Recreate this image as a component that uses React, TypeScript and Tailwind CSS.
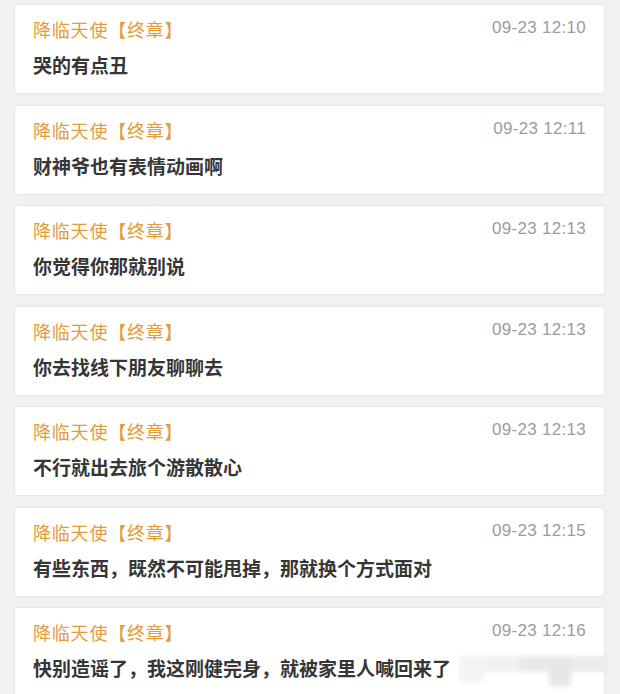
import React from "react";

interface Message {
  time: string;
  text: string;
}

const messages: Message[] = [
  { time: "09-23 12:10", text: "哭的有点丑" },
  { time: "09-23 12:11", text: "财神爷也有表情动画啊" },
  { time: "09-23 12:13", text: "你觉得你那就别说" },
  { time: "09-23 12:13", text: "你去找线下朋友聊聊去" },
  { time: "09-23 12:13", text: "不行就出去旅个游散散心" },
  { time: "09-23 12:15", text: "有些东西，既然不可能甩掉，那就换个方式面对" },
  { time: "09-23 12:16", text: "快别造谣了，我这刚健完身，就被家里人喊回来了" },
];

const cjk = { fontFamily: '"Microsoft YaHei", "Noto Sans CJK SC", "Noto Sans", sans-serif' };

const MessageCard: React.FC<{ msg: Message; last?: boolean }> = ({ msg, last }) => {
  return (
    <div className="relative h-[90px] shrink-0 rounded-[3px] border border-[#e6e6e6] bg-white px-[18px] pt-[12px]">
      <div className="flex h-[24px] items-center justify-between">
        <span className="text-[18px] leading-[24px] tracking-[0.8px] text-[#e49b3a]" style={cjk}>
          降临天使【终章】
        </span>
        <span className="-mt-[2px] font-['Liberation_Sans',sans-serif] text-[17px] leading-[20px] tracking-[0.3px] text-[#9c9c9c]">
          {msg.time}
        </span>
      </div>
      <div className="mt-[11px] text-[19px] font-bold leading-[26px] text-[#363636]" style={cjk}>
        {msg.text}
      </div>
      {last && (
        <div className="absolute -right-px top-[46px] flex h-[40px] w-[146px] blur-[2px]">
          <div className="mt-[2px] h-[26px] w-[24px] bg-[#f4f4f4]" />
          <div className="mt-[2px] h-[16px] w-[36px] bg-[#f1f1f1]" />
          <div className="mt-[2px] h-[16px] w-[30px] bg-[#e9e9e9]" />
          <div className="mt-[2px] h-[30px] w-[22px] bg-[#e7e7e7]" />
          <div className="mt-[2px] h-[16px] w-[34px] bg-[#ebebeb]" />
        </div>
      )}
    </div>
  );
};

export default function App() {
  return (
    <div className="h-[694px] w-[620px] overflow-hidden bg-[#f1f1f1]">
      <div className="flex flex-col gap-[10.5px] pl-[14px] pr-[15px] pt-[4px]">
        {messages.map((m, i) => (
          <MessageCard key={i} msg={m} last={i === messages.length - 1} />
        ))}
      </div>
    </div>
  );
}
